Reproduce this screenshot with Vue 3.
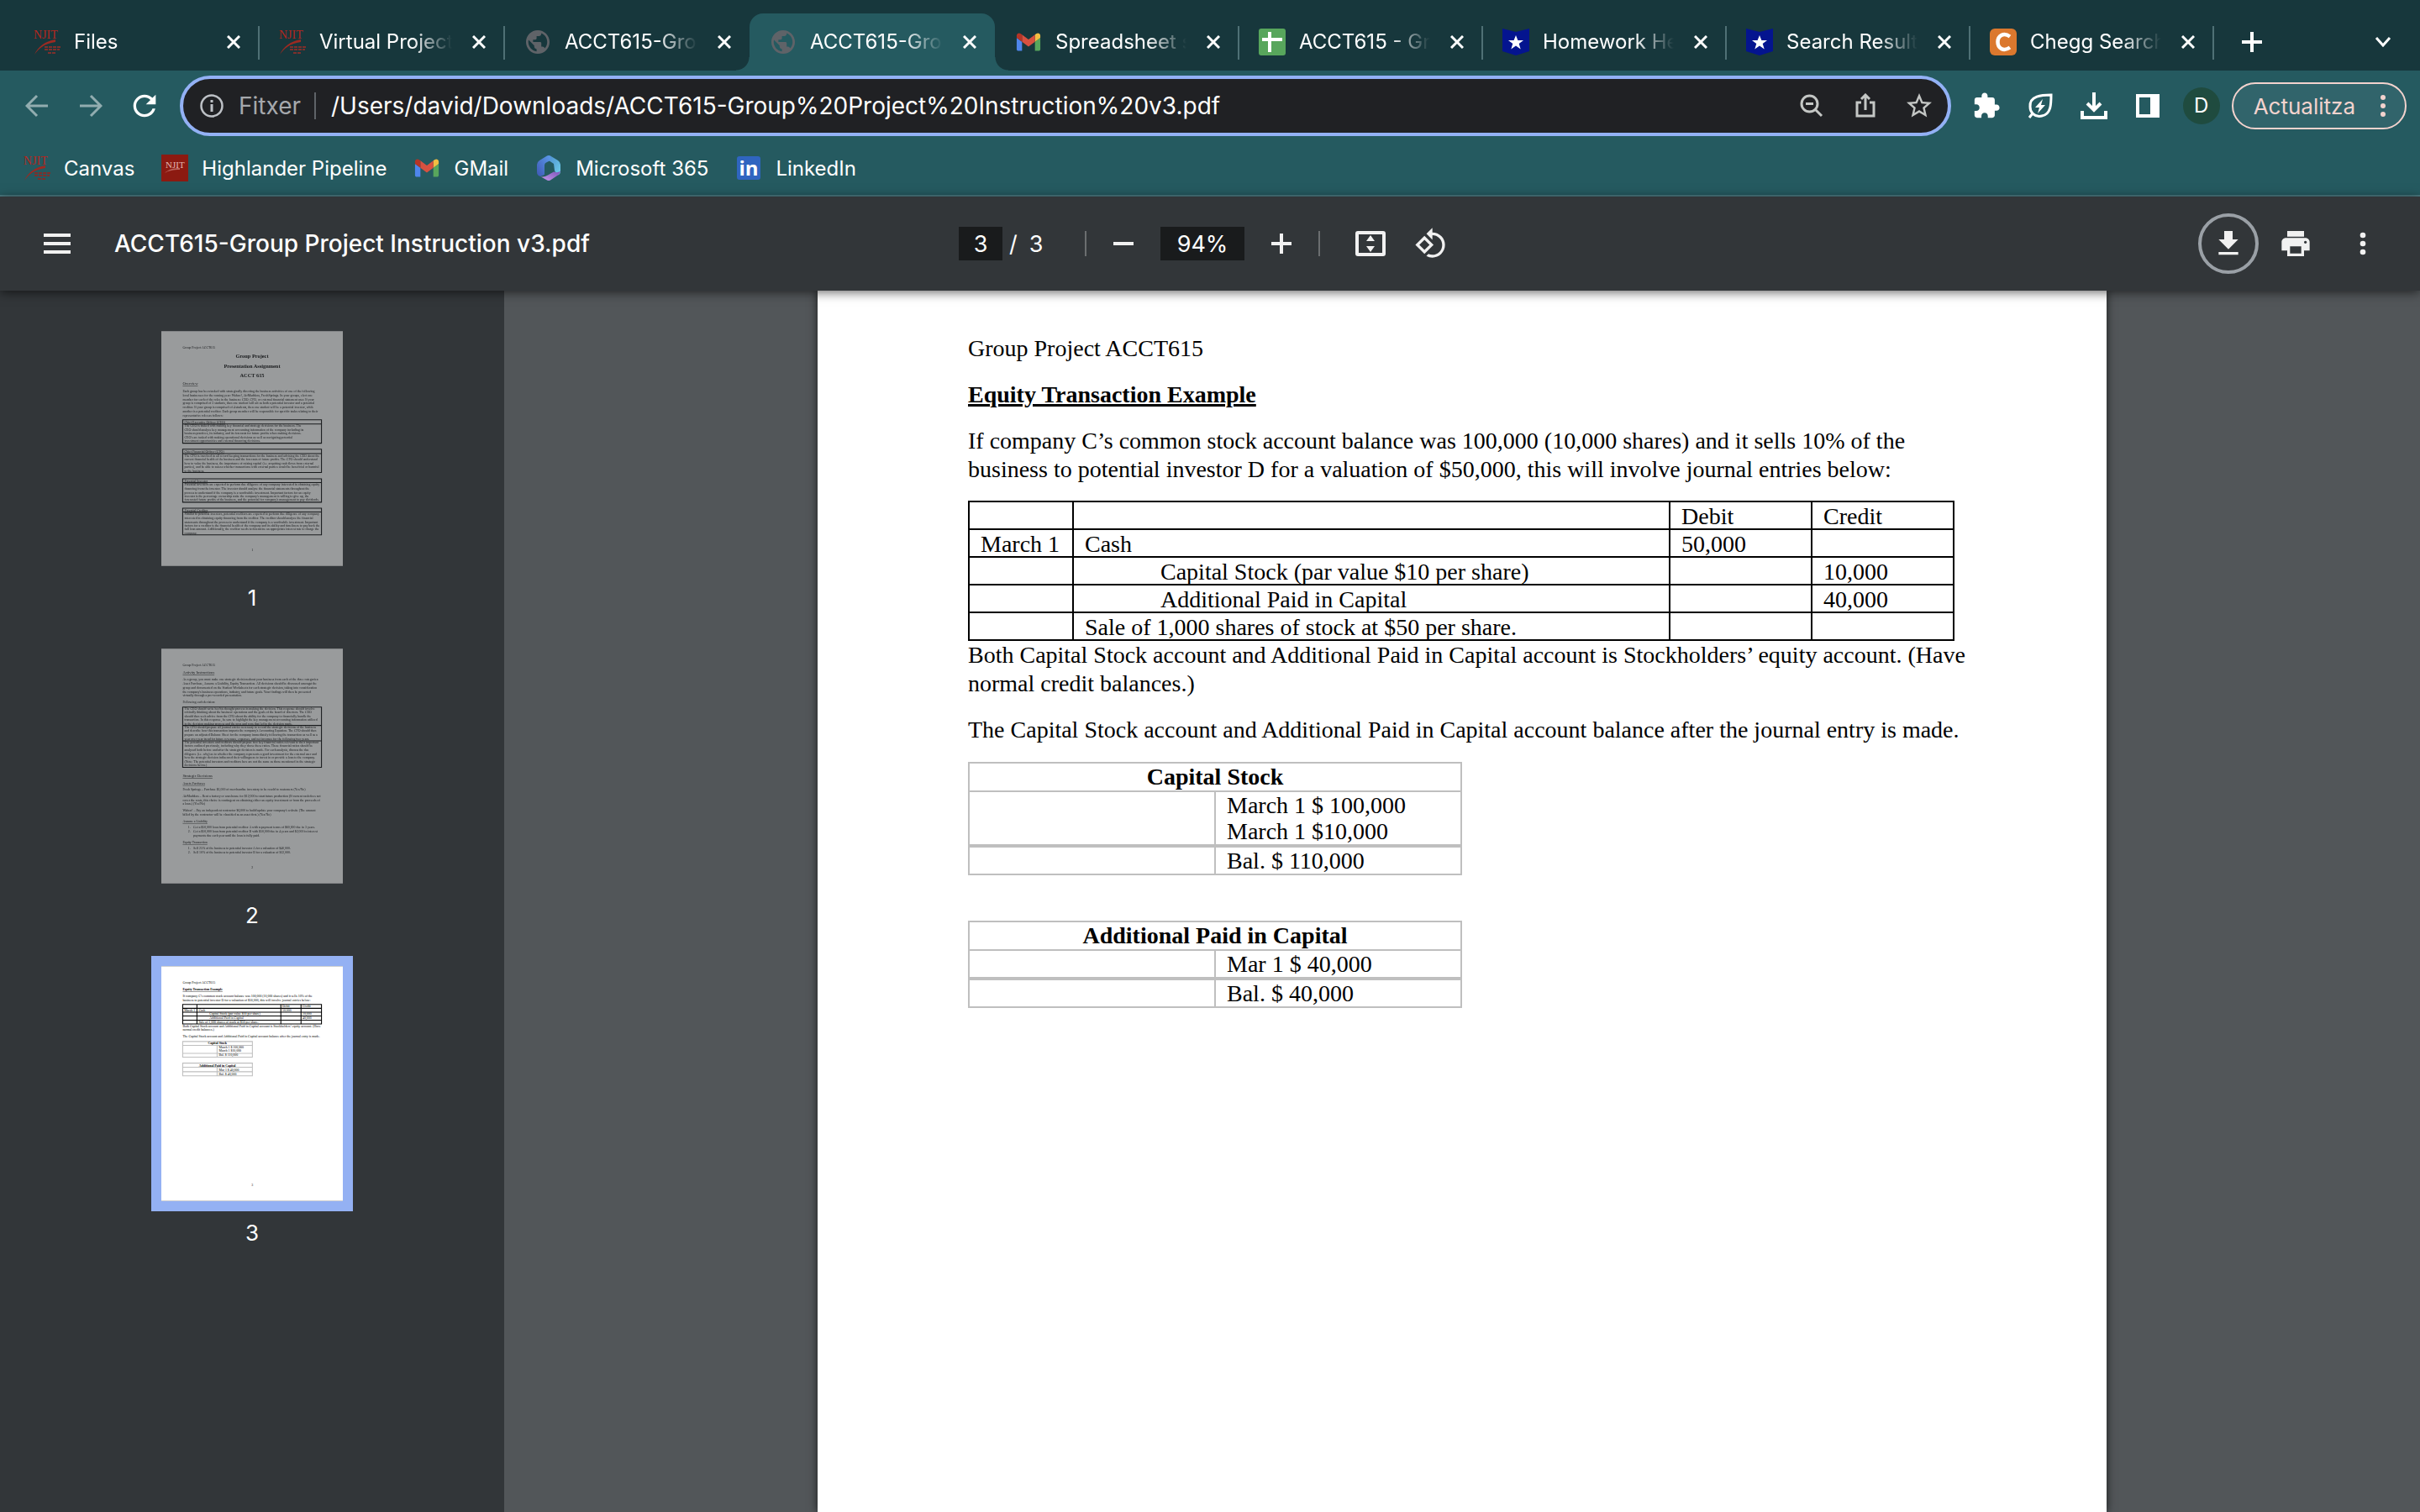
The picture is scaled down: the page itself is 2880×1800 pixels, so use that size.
<template>
  <div class="browser">
    <nav class="tab-strip">
      <div v-for="(tab, i) in tabs" :key="i" :class="['tab', { active: tab.active, divided: tab.divided }]">
        <svg class="favicon" :viewBox="icons[tab.icon].box" v-html="icons[tab.icon].body"></svg>
        <a class="tab-title" href="#">{{ tab.title }}</a>
        <button class="tab-close" aria-label="Tanca">
          <svg width="16" height="16" viewBox="0 0 16 16"><path d="M1 1l14 14M15 1L1 15" /></svg>
        </button>
      </div>
      <button class="strip-btn new-tab" aria-label="Pestanya nova">
        <svg width="24" height="24" viewBox="0 0 24 24"><path d="M12 0v24M0 12h24" stroke-width="4" /></svg>
      </button>
      <button class="strip-btn tab-search" aria-label="Cerca pestanyes">
        <svg width="20" height="12" viewBox="0 0 20 12"><path d="M2 1l8 9 8-9" stroke-width="3" /></svg>
      </button>
    </nav>

    <div class="toolbar">
      <button class="tool dim" aria-label="Enrere">
        <svg width="28" height="28" viewBox="0 0 28 28"><path class="line" d="M14 2L2 14l12 12M2 14h25" /></svg>
      </button>
      <button class="tool dim" aria-label="Endavant">
        <svg width="28" height="28" viewBox="0 0 28 28"><path class="line" d="M14 2l12 12-12 12M26 14H1" /></svg>
      </button>
      <button class="tool" aria-label="Torna a carregar">
        <svg width="40" height="40" viewBox="0 0 24 24"><path d="M17.65 6.35C16.2 4.9 14.21 4 12 4c-4.42 0-7.99 3.58-7.99 8s3.57 8 7.99 8c3.73 0 6.84-2.55 7.73-6h-2.08c-.82 2.33-3.04 4-5.65 4-3.31 0-6-2.69-6-6s2.69-6 6-6c1.66 0 3.14.69 4.22 1.78L13 11h7V4l-2.35 2.35z" /></svg>
      </button>
      <div class="omnibox">
        <svg class="info" width="28" height="28" viewBox="0 0 28 28">
          <circle cx="14" cy="14" r="12.5" fill="none" stroke="#bdc1c6" stroke-width="2.5" />
          <path d="M14 12v9M14 7v3" stroke="#bdc1c6" stroke-width="3" />
        </svg>
        <label class="scheme" for="url">Fitxer</label>
        <input id="url" v-model="url" class="url" type="text" spellcheck="false" />
        <button class="tool omni" aria-label="Zoom">
          <svg width="28" height="28" viewBox="0 0 28 28"><circle class="line" cx="11.5" cy="11.5" r="9.5" /><path class="line" d="M18 18l8 8M7 11.5h9" /></svg>
        </button>
        <button class="tool omni" aria-label="Comparteix">
          <svg width="24" height="30" viewBox="0 0 24 30"><path class="line" d="M7 11H2v16h20V11h-5M12 20V3M7 7l5-5 5 5" /></svg>
        </button>
        <button class="tool omni" aria-label="Afegeix a preferits">
          <svg width="36" height="36" viewBox="0 0 24 24"><path d="M22 9.24l-7.19-.62L12 2 9.19 8.63 2 9.24l5.46 4.73L5.82 21 12 17.27 18.18 21l-1.63-7.03L22 9.24zM12 15.4l-3.76 2.27 1-4.28-3.32-2.88 4.38-.38L12 6.1l1.71 4.04 4.38.38-3.32 2.88 1 4.28L12 15.4z" /></svg>
        </button>
      </div>
      <button class="tool" aria-label="Extensions">
        <svg width="34" height="34" viewBox="0 0 24 24"><path d="M20.5 11H19V7c0-1.1-.9-2-2-2h-4V3.5C13 2.12 11.88 1 10.5 1S8 2.12 8 3.5V5H4c-1.1 0-1.99.9-1.99 2v3.8H3.5c1.49 0 2.7 1.21 2.7 2.7s-1.21 2.7-2.7 2.7H2V20c0 1.1.9 2 2 2h3.8v-1.5c0-1.49 1.21-2.7 2.7-2.7 1.49 0 2.7 1.21 2.7 2.7V22H17c1.1 0 2-.9 2-2v-4h1.5c1.38 0 2.5-1.12 2.5-2.5S21.88 11 20.5 11z" /></svg>
      </button>
      <button class="tool" aria-label="Estalvi d'energia">
        <svg width="32" height="32" viewBox="0 0 32 32"><path class="line" d="M29 3C18 3 3 4 4 17c0 4 1 6 3 8 3 3 7 4 11 3C29 26 29 14 29 3zM7 25l-4 5" /><path d="M19 8l-9 10h5l-2 7 9-10h-5z" /></svg>
      </button>
      <button class="tool" aria-label="Baixades">
        <svg width="32" height="32" viewBox="0 0 32 32"><path d="M16 0v19M8 13l8 8 8-8M2 22v8h28v-8" fill="none" stroke="#fff" stroke-width="4" /></svg>
      </button>
      <button class="tool" aria-label="Tauler lateral">
        <svg width="28" height="28" viewBox="0 0 28 28"><path fill-rule="evenodd" d="M0 0h28v28H0zM4 4h13v20H4z" /></svg>
      </button>
      <button class="tool" aria-label="Perfil"><span class="avatar">D</span></button>
      <button class="update">
        Actualitza
        <svg width="8" height="28" viewBox="0 0 8 28"><circle cx="4" cy="4" r="3" /><circle cx="4" cy="14" r="3" /><circle cx="4" cy="24" r="3" /></svg>
      </button>
    </div>

    <div class="bookmarks">
      <a v-for="mark in bookmarks" :key="mark.title" class="bookmark" href="#">
        <svg class="favicon" :viewBox="icons[mark.icon].box" v-html="icons[mark.icon].body"></svg>{{ mark.title }}
      </a>
    </div>

    <header class="pdf-bar">
      <div class="pdf-start">
        <button class="pdf-btn" aria-label="Menú">
          <svg width="32" height="24" viewBox="0 0 32 24"><path d="M0 0h32v4H0zM0 10h32v4H0zM0 20h32v4H0z" /></svg>
        </button>
        <span class="pdf-title">ACCT615-Group Project Instruction v3.pdf</span>
      </div>
      <div class="pdf-center">
        <input v-model="page" class="pdf-input page-input" type="text" aria-label="Pàgina" />
        <span class="page-total"><span>/</span><span>3</span></span>
        <i class="rule"></i>
        <button class="pdf-btn" aria-label="Redueix">
          <svg width="24" height="24" viewBox="0 0 24 24"><path d="M0 10h24v4H0z" /></svg>
        </button>
        <input v-model="zoom" class="pdf-input zoom-input" type="text" aria-label="Zoom" />
        <button class="pdf-btn" aria-label="Amplia">
          <svg width="24" height="24" viewBox="0 0 24 24"><path d="M0 10h10V0h4v10h10v4H14v10h-4V14H0z" /></svg>
        </button>
        <i class="rule"></i>
        <div class="fit-group">
          <button class="pdf-btn" aria-label="Ajusta a la pàgina">
            <svg width="36" height="30" viewBox="0 0 36 30"><path fill-rule="evenodd" d="M3 0h30q3 0 3 3v24q0 3-3 3H3q-3 0-3-3V3q0-3 3-3zM4 4v22h28V4zM18 5l5 7H13zM18 25l5-7H13z" /></svg>
          </button>
          <button class="pdf-btn" aria-label="Gira">
            <svg width="40" height="40" viewBox="0 0 24 24"><path d="M7.34 6.41L.86 12.9l6.49 6.48 6.49-6.48-6.5-6.49zM3.69 12.9l3.66-3.66L11 12.9l-3.66 3.66-3.65-3.66zm15.67-6.26C17.61 4.88 15.3 4 13 4V.76L8.76 5 13 9.24V6c1.79 0 3.58.68 4.95 2.05 2.73 2.73 2.73 7.17 0 9.9C16.58 19.32 14.79 20 13 20c-.97 0-1.94-.21-2.84-.61l-1.49 1.49C10.02 21.62 11.51 22 13 22c2.3 0 4.61-.88 6.36-2.64 3.52-3.51 3.52-9.21 0-12.72z" /></svg>
          </button>
        </div>
      </div>
      <div class="pdf-end">
        <button class="pdf-btn ringed" aria-label="Baixa">
          <svg width="40" height="40" viewBox="0 0 24 24"><path d="M19 9h-4V3H9v6H5l7 7 7-7zM5 18v2h14v-2H5z" /></svg>
        </button>
        <button class="pdf-btn" aria-label="Imprimeix">
          <svg width="40" height="40" viewBox="0 0 24 24"><path d="M19 8H5c-1.66 0-3 1.34-3 3v6h4v4h12v-4h4v-6c0-1.66-1.34-3-3-3zm-3 11H8v-5h8v5zm3-7c-.55 0-1-.45-1-1s.45-1 1-1 1 .45 1 1-.45 1-1 1zm-1-9H6v4h12V3z" /></svg>
        </button>
        <button class="pdf-btn" aria-label="Més accions">
          <svg width="40" height="40" viewBox="0 0 24 24"><circle cx="12" cy="6" r="2" /><circle cx="12" cy="12" r="2" /><circle cx="12" cy="18" r="2" /></svg>
        </button>
      </div>
    </header>

    <main class="viewer">
      <aside class="thumbs">
        <div v-for="(thumb, i) in thumbs" :key="i" class="thumb-item">
          <button :class="['thumb', { selected: i === 2 }]" :aria-label="'Miniatura ' + (i + 1)">
            <svg viewBox="0 0 612 792">
              <rect width="612" height="792" fill="#fff" />
              <path v-for="(f, k) in thumb.frames" :key="'f' + k" :d="f.d" :stroke="f.c" class="frame" />
              <text
                v-for="(t, k) in thumb.lines"
                :key="k"
                :x="t[0]"
                :y="t[1]"
                :class="t[3]"
              >{{ t[2] }}</text>
            </svg>
          </button>
          <span class="thumb-label">{{ i + 1 }}</span>
        </div>
      </aside>

      <section class="canvas">
        <article class="sheet">
          <p>Group Project ACCT615</p>
          <h1>Equity Transaction Example</h1>
          <p class="before-table">
            If company C’s common stock account balance was 100,000 (10,000 shares) and it sells 10% of the<br />
            business to potential investor D for a valuation of $50,000, this will involve journal entries below:
          </p>
          <table class="journal">
            <colgroup>
              <col class="c-date" />
              <col />
              <col class="c-amount" />
              <col class="c-amount" />
            </colgroup>
            <tbody>
              <tr v-for="(row, i) in journal" :key="i">
                <td>{{ row.date }}</td>
                <td :class="{ indent: row.indent }">{{ row.text }}</td>
                <td>{{ row.debit }}</td>
                <td>{{ row.credit }}</td>
              </tr>
            </tbody>
          </table>
          <p>
            Both Capital Stock account and Additional Paid in Capital account is Stockholders’ equity account. (Have<br />
            normal credit balances.)
          </p>
          <p>The Capital Stock account and Additional Paid in Capital account balance after the journal entry is made.</p>
          <table v-for="acc in accounts" :key="acc.name" class="t-account">
            <thead>
              <tr><th colspan="2">{{ acc.name }}</th></tr>
            </thead>
            <tbody>
              <tr>
                <td></td>
                <td><div v-for="e in acc.entries" :key="e">{{ e }}</div></td>
              </tr>
              <tr class="balance">
                <td></td>
                <td>{{ acc.balance }}</td>
              </tr>
            </tbody>
          </table>
        </article>
      </section>
    </main>
  </div>
</template>

<script setup>
import { ref } from "vue";

const url = ref("/Users/david/Downloads/ACCT615-Group%20Project%20Instruction%20v3.pdf");
const page = ref("3");
const zoom = ref("94%");

// site icons, used by the tabs and the bookmarks
const icons = {
  njit: {
    box: "0 0 32 32",
    body: `<text x="0" y="12" font-family="Liberation Serif, serif" font-size="14" fill="#b3261e">NJIT</text>
      <path d="M26 13C13 15 5 22 1 31c5-7 11-13 25-15z" fill="#9c2a22"/>
      <path d="M13 22h19M13 25h18M17 29h10" stroke="#7e2f2b" stroke-width="2" stroke-dasharray="4 1"/>`,
  },
  highlander: {
    box: "0 0 32 32",
    body: `<rect width="32" height="32" fill="#8c1a11"/>
      <text x="5" y="16" font-family="Liberation Serif, serif" font-size="11" fill="#e3b7b2">NJIT</text>
      <path d="M22 16c-8 0-14 2-18 6 5-3 10-4 18-4z" fill="#b9645c"/>`,
  },
  globe: {
    box: "0.6 0.6 22.8 22.8",
    body: `<path fill="#5f6368" d="M12 2C6.48 2 2 6.48 2 12s4.48 10 10 10 10-4.48 10-10S17.52 2 12 2zm-1 17.93c-3.95-.49-7-3.85-7-7.93 0-.62.08-1.21.21-1.79L9 15v1c0 1.1.9 2 2 2v1.93zm6.9-2.54c-.26-.81-1-1.39-1.9-1.39h-1v-3c0-.55-.45-1-1-1H8v-2h2c.55 0 1-.45 1-1V7h2c1.1 0 2-.9 2-2v-.41c2.93 1.19 5 4.06 5 7.41 0 2.08-.8 3.97-2.1 5.39z"/>`,
  },
  gmail: {
    box: "46 25 100 100",
    body: `<path fill="#4f86ec" d="M58 108h14V74L52 59v43c0 3.32 2.69 6 6 6"/>
      <path fill="#58a65c" d="M120 108h14c3.32 0 6-2.69 6-6V59l-20 15"/>
      <path fill="#f2be42" d="M120 48v26l20-15v-8c0-7.42-8.47-11.65-14.4-7.2"/>
      <path fill="#d85140" d="M72 74V48l24 18 24-18v26L96 92"/>
      <path fill="#b53426" d="M52 51v8l20 15V48l-5.6-4.2c-5.94-4.45-14.4-.22-14.4 7.2"/>`,
  },
  sheet: {
    box: "0 0 32 32",
    body: `<rect width="32" height="32" rx="3" fill="#58a65c"/>
      <path d="M13 4v24M4 13h24" stroke="#fff" stroke-width="4"/>`,
  },
  flag: {
    box: "0 0 32 32",
    body: `<path d="M0 0l16 4 16-4v27l-16 5-16-5z" fill="#04148f"/>
      <path d="M16 8l2.4 6H25l-5.3 4 2 6.5-5.7-4-5.7 4 2-6.5L7 14h6.6z" fill="#fff"/>`,
  },
  chegg: {
    box: "0 0 32 32",
    body: `<rect width="32" height="32" rx="6" fill="#db782e"/>
      <path d="M24 9.500C16 4 9.500 9 9.500 16S16 28 24 22.500" fill="none" stroke="#fff" stroke-width="4.500"/>`,
  },
  m365: {
    box: "0 0 32 32",
    body: `<linearGradient id="m-a" x1="0" y1="1" x2="1" y2="0">
        <stop offset="0" stop-color="#3f57b5"/><stop offset="1" stop-color="#5b9bea"/>
      </linearGradient>
      <linearGradient id="m-b" x1="0" y1="0" x2="1" y2="1">
        <stop offset="0" stop-color="#4e8fd0"/><stop offset="1" stop-color="#6fd0ea"/>
      </linearGradient>
      <linearGradient id="m-c" x1="0" y1="1" x2="1" y2="0">
        <stop offset="0" stop-color="#c99aec"/><stop offset="1" stop-color="#7a52b8"/>
      </linearGradient>
      <path d="M18 1.500l9 5.500q3 2 3 5v8q0 3-3 4.500-3-2-4-5.500l-1-8-6-4z" fill="url(#m-b)"/>
      <path d="M16 1q-1 0-2 .5L5 7q-3 2-3 5v9q0 4 4 5l5-2V13q0-3 3-4l4-2V1.500q-1-.5-2-.5z" fill="url(#m-a)"/>
      <path d="M6 26l8 4.500q2 1 4 0l9-6q3-2 3-5-3 3-8 1l-7 4q-5 3-9 1.500z" fill="url(#m-c)"/>`,
  },
  linkedin: {
    box: "0 0 32 32",
    body: `<rect x="2" y="2" width="28" height="28" rx="3" fill="#2f65c0"/>
      <text x="16" y="25" text-anchor="middle" font-family="Open Sans, sans-serif" font-weight="700" font-size="24" fill="#fff">in</text>`,
  },
};

const tabs = [
  { icon: "njit", title: "Files", divided: true },
  { icon: "njit", title: "Virtual Project", divided: true },
  { icon: "globe", title: "ACCT615-Gro" },
  { icon: "globe", title: "ACCT615-Gro", active: true },
  { icon: "gmail", title: "Spreadsheet s", divided: true },
  { icon: "sheet", title: "ACCT615 - Gr", divided: true },
  { icon: "flag", title: "Homework He", divided: true },
  { icon: "flag", title: "Search Result", divided: true },
  { icon: "chegg", title: "Chegg Search", divided: true },
];

const bookmarks = [
  { icon: "njit", title: "Canvas" },
  { icon: "highlander", title: "Highlander Pipeline" },
  { icon: "gmail", title: "GMail" },
  { icon: "m365", title: "Microsoft 365" },
  { icon: "linkedin", title: "LinkedIn" },
];

const journal = [
  { debit: "Debit", credit: "Credit" },
  { date: "March 1", text: "Cash", debit: "50,000" },
  { text: "Capital Stock (par value $10 per share)", indent: true, credit: "10,000" },
  { text: "Additional Paid in Capital", indent: true, credit: "40,000" },
  { text: "Sale of 1,000 shares of stock at $50 per share." },
];

const accounts = [
  { name: "Capital Stock", entries: ["March 1 $ 100,000", "March 1 $10,000"], balance: "Bal. $ 110,000" },
  { name: "Additional Paid in Capital", entries: ["Mar 1 $ 40,000"], balance: "Bal. $ 40,000" },
];

// thumbnails are drawn in page points (612 x 792): [x, baseline, text, class]
const thumbs = [
  {
    frames: [
      { c: "#000", d: "M72 299H540V378H72zM72 313H540" },
      { c: "#000", d: "M72 398H540V477H72zM72 413H540" },
      { c: "#000", d: "M72 498H540V577H72zM72 511H540" },
      { c: "#000", d: "M72 597H540V687H72zM72 610H540" },
    ],
    lines: [
      [72, 59, "Group Project ACCT615"],
      [306, 90, "Group Project", "title"],
      [306, 125, "Presentation Assignment", "title"],
      [306, 156, "ACCT 615", "title"],
      [72, 182, "Overview", "head"],
      [72, 207, "Each group has been tasked with strategically directing the business activities of one of the following"],
      [72, 221, "local businesses for the coming year: Wahoo!, AirMaddens, FreshSprings. In your groups, elect one"],
      [72, 234, "member for each of the roles in the business: CEO, CFO, or external financial statement user. If your"],
      [72, 247, "group is comprised of 3 students, then one student will act as both a potential investor and a potential"],
      [72, 260, "creditor. If your group is comprised of 4 students, then one student will be a potential investor, while"],
      [72, 274, "another is a potential creditor. Each group member will be responsible for specific tasks relating to their"],
      [72, 288, "representative roles as follows:"],
      [78, 311, "Chief Executive Officer (CEO)", "under"],
      [78, 323, "The CEO is tasked with making key financial and strategy decisions for the business. The"],
      [78, 337, "CEO should analyze key management accounting information of the company including its"],
      [78, 349, "business practices, its industry, and its forecasts for future profits when making decisions."],
      [78, 363, "CEO's are tasked with making operational decisions as well as navigating potential"],
      [78, 374, "investment opportunities and external financing decisions."],
      [78, 411, "Chief Financial Officer (CFO)", "under"],
      [78, 423, "The CFO is involved in all record keeping transactions for the business and advising the CEO about the"],
      [78, 436, "current financial health of the business and the forecasts of future profits. The CFO should understand"],
      [78, 449, "how to value the business, the importance of raising capital (i.e. acquiring cash flows from external"],
      [78, 462, "parties), and be able to assess whether transactions with external parties would be beneficial or harmful"],
      [78, 474, "to the business."],
      [78, 510, "Potential Investor", "under"],
      [78, 522, "Potential investors are expected to perform due diligence of any company interested in obtaining equity"],
      [78, 536, "financing from the investor. The investor should analyze the financial statements throughout the"],
      [78, 548, "process to understand if the company is a worthwhile investment. Important factors for an equity"],
      [78, 561, "investor is the percentage ownership stake the company's management is willing to give up, the"],
      [78, 573, "forecasted future profits of the business, and the potential for company's management to pay dividends."],
      [78, 609, "Potential Creditor", "under"],
      [78, 621, "Similar to potential investors, potential creditors are expected to perform due diligence of any company"],
      [78, 635, "interested in obtaining equity financing from the creditor. The creditor should analyze the financial"],
      [78, 647, "statements throughout the process to understand if the company is a worthwhile investment. Important"],
      [78, 660, "factors for a creditor is the financial health of the company and its ability and timeliness to pay back the"],
      [78, 672, "full loan amount. Additionally, the creditor needs to determine an appropriate interest rate to charge the"],
      [78, 685, "company."],
      [304, 741, "1"],
    ],
  },
  {
    frames: [{ c: "#000", d: "M72 197H540V400H72zM72 259H540M72 311H540" }],
    lines: [
      [72, 59, "Group Project ACCT615"],
      [72, 85, "Activity Instructions", "head"],
      [72, 107, "As a group, you must make one strategic decision about your business from each of the three categories:"],
      [72, 121, "Asset Purchase, Assume a Liability, Equity Transaction. All decisions should be discussed amongst the"],
      [72, 135, "group and documented on the Student Worksheets for each strategic decision, taking into consideration"],
      [72, 149, "the company's business operations, industry, and future goals. Your findings will then be presented"],
      [72, 161, "virtually through a pre-recorded presentation."],
      [72, 183, "Following each decision:"],
      [78, 206, "The CEO should write her/his thought process in making the decision. This response should involve"],
      [78, 218, "critically thinking about the business' operations and the goals of the board of directors. The CEO"],
      [78, 231, "should then seek advice from the CFO about the ability for the company to financially handle the"],
      [78, 244, "transaction. In this response, be sure to highlight the key management accounting information utilized"],
      [78, 257, "in the decision making process and the pros and cons that led to the decision made."],
      [78, 268, "The CFO should prepare all journal entries necessary to record the strategic decisions of the business"],
      [78, 281, "and describe how this transaction impacts the company's Accounting Equation. The CFO should then"],
      [78, 294, "prepare an adjusted Balance Sheet for the company immediately following the transaction as well as a"],
      [78, 307, "year over year trend for future revenues, expenses, and net incomes for the following two years."],
      [78, 319, "The potential investors and creditors should prepare two key financial ratios relevant to their important"],
      [78, 332, "factors outlined previously, including why they chose these ratios. These financial ratios should be"],
      [78, 346, "analyzed both before and after the strategic decision is made. For each analysis, discuss the due"],
      [78, 358, "diligence (i.e. why) as to whether the company represents a good investment for the external user and"],
      [78, 371, "how the strategic decision influenced their willingness to invest in or provide a loan to the company."],
      [78, 384, "(Note: The potential investors and creditors here are not the same as those mentioned in the strategic"],
      [78, 397, "decisions below.)"],
      [72, 434, "Strategic Decisions", "head"],
      [72, 458, "Assets Purchases", "under"],
      [72, 479, "Fresh Springs – Purchase $3,000 of merchandise inventory to be resold to customers (Yes/No)"],
      [72, 502, "AirMaddens – Rent a factory or warehouse for $12,000 to start future production (If current cash does not"],
      [72, 515, "cover the costs, this choice is contingent on obtaining either an equity investment or from the proceeds of"],
      [72, 527, "a loan.) (Yes/No)"],
      [72, 550, "Wahoo! – Pay an independent contractor $6,000 to build/update your company's website (The amount"],
      [72, 563, "billed by the contractor will be classified as an asset first.) (Yes/No)"],
      [72, 587, "Assume a Liability", "under"],
      [90, 606, "1."],
      [108, 606, "Get a $50,000 loan from potential creditor A with repayment terms of $60,000 due in 3 years."],
      [90, 620, "2."],
      [108, 620, "Get a $50,000 loan from potential creditor B with $50,000 due in 4 years and $2,000 in interest"],
      [108, 634, "payments due each year until the loan is fully paid."],
      [72, 657, "Equity Transaction", "under"],
      [90, 676, "1."],
      [108, 676, "Sell 25% of the business to potential investor A for a valuation of $40,000."],
      [90, 690, "2."],
      [108, 690, "Sell 10% of the business to potential investor B for a valuation of $12,000."],
      [304, 741, "2"],
    ],
  },
  {
    frames: [
      { c: "#000", d: "M72 129H540V195H72zM72 142H540M72 155H540M72 168H540M72 182H540M120 129V195M403 129V195M471 129V195" },
      { c: "#bfbfbf", d: "M72 254H307V307H72zM72 267H307M72 294H307M188 267V307" },
      { c: "#bfbfbf", d: "M72 327H307V370H72zM72 341H307M72 356H307M188 341V370" },
    ],
    lines: [
      [72, 59, "Group Project ACCT615"],
      [72, 82, "Equity Transaction Example", "under bold"],
      [72, 105, "If company C’s common stock account balance was 100,000 (10,000 shares) and it sells 10% of the"],
      [72, 118, "business to potential investor D for a valuation of $50,000, this will involve journal entries below:"],
      [408, 138, "Debit"],
      [476, 138, "Credit"],
      [77, 152, "March 1"],
      [126, 152, "Cash"],
      [408, 152, "50,000"],
      [162, 165, "Capital Stock (par value $10 per share)"],
      [476, 165, "10,000"],
      [162, 178, "Additional Paid in Capital"],
      [476, 178, "40,000"],
      [126, 192, "Sale of 1,000 shares of stock at $50 per share."],
      [72, 206, "Both Capital Stock account and Additional Paid in Capital account is Stockholders’ equity account. (Have"],
      [72, 218, "normal credit balances.)"],
      [72, 241, "The Capital Stock account and Additional Paid in Capital account balance after the journal entry is made."],
      [157, 264, "Capital Stock", "bold"],
      [194, 278, "March 1 $ 100,000"],
      [194, 289, "March 1 $10,000"],
      [194, 303, "Bal. $ 110,000"],
      [127, 339, "Additional Paid in Capital", "bold"],
      [194, 354, "Mar 1 $ 40,000"],
      [194, 367, "Bal. $ 40,000"],
      [304, 741, "3"],
    ],
  },
];
</script>

<style>
body {
  margin: 0;
  background: #525659;
}
</style>

<style scoped>
* {
  box-sizing: border-box;
}
.browser {
  display: flex;
  flex-direction: column;
  height: 100vh;
  overflow: hidden;
  font-family: Inter, "Liberation Sans", sans-serif;
  color: #fff;
}
button,
input {
  font: inherit;
  color: inherit;
  background: none;
  border: none;
  padding: 0;
  margin: 0;
  outline: none;
}
button {
  display: flex;
  align-items: center;
  justify-content: center;
  cursor: pointer;
}
a {
  color: inherit;
  text-decoration: none;
}
.favicon {
  width: 32px;
  height: 32px;
  flex: none;
}

/* tabs */
.tab-strip {
  display: flex;
  height: 84px;
  flex: none;
  padding: 16px 16px 0;
  background: #17373c;
  font-size: 24px;
}
.tab {
  position: relative;
  display: flex;
  align-items: center;
  flex: 0 1 290px;
  min-width: 0;
  padding: 0 14px 0 24px;
}
.tab:nth-child(-n + 4) {
  flex-basis: 292px;
}
.tab.divided::after {
  content: "";
  position: absolute;
  right: -1px;
  top: 15px;
  width: 2px;
  height: 40px;
  background: #4f7075;
}
.tab.active {
  background: #255a60;
  border-radius: 16px 16px 0 0;
}
.tab.active::before,
.tab.active::after {
  content: "";
  position: absolute;
  bottom: 0;
  width: 16px;
  height: 16px;
}
.tab.active::before {
  left: -16px;
  background: radial-gradient(circle at 0 0, transparent 15px, #255a60 16px);
}
.tab.active::after {
  right: -16px;
  background: radial-gradient(circle at 100% 0, transparent 15px, #255a60 16px);
}
.tab-title {
  flex: 1;
  min-width: 0;
  margin: 0 16px;
  overflow: hidden;
  white-space: nowrap;
  line-height: 32px;
  mask-image: linear-gradient(to right, #000 70%, transparent);
}
.tab-close {
  width: 32px;
  height: 32px;
}
.tab-close svg {
  stroke: #fff;
  stroke-width: 3;
}
.strip-btn svg {
  fill: none;
  stroke: #fff;
}
.new-tab {
  width: 56px;
  margin-left: 18px;
}
.tab-search {
  width: 56px;
  margin-left: auto;
}

/* address bar */
.toolbar {
  display: flex;
  align-items: center;
  height: 84px;
  flex: none;
  padding: 0 16px 0 12px;
  background: #255a60;
}
.tool {
  width: 64px;
  height: 64px;
  flex: none;
}
.tool svg {
  fill: #fff;
}
.line {
  fill: none;
  stroke: #fff;
  stroke-width: 3;
}
.dim {
  opacity: 0.5;
}
.omnibox {
  display: flex;
  align-items: center;
  flex: 1;
  height: 72px;
  min-width: 0;
  margin: 0 10px;
  padding: 0 2px 0 20px;
  border: 4px solid #93b1f5;
  border-radius: 36px;
  background: #202124;
  font-size: 28px;
}
.info {
  flex: none;
}
.scheme {
  margin-left: 18px;
  padding-right: 16px;
  border-right: 2px solid #5f6368;
  line-height: 32px;
  color: #a5a8ac;
}
.url {
  flex: 1;
  min-width: 0;
  margin-left: 18px;
}
.omni svg {
  fill: #c4c7c5;
}
.omni .line {
  fill: none;
  stroke: #c4c7c5;
}
.avatar {
  width: 44px;
  height: 44px;
  border-radius: 50%;
  background: #1f4b3f;
  font-size: 24px;
  line-height: 44px;
  text-align: center;
}
.update {
  gap: 29px;
  height: 56px;
  margin-left: 4px;
  padding: 0 22px 0 24px;
  border: 2px solid #f3d3ce;
  border-radius: 28px;
  background: #31646b;
  font-size: 26px;
  color: #f3d3ce;
}
.update svg {
  fill: #f3d3ce;
}

/* bookmarks */
.bookmarks {
  display: flex;
  align-items: center;
  gap: 32px;
  height: 66px;
  flex: none;
  padding: 0 28px;
  background: #255a60;
  border-bottom: 2px solid #4b7b82;
  font-size: 24px;
}
.bookmark {
  display: flex;
  align-items: center;
  gap: 16px;
  white-space: nowrap;
}

/* pdf toolbar */
.pdf-bar {
  position: relative;
  z-index: 1;
  display: flex;
  align-items: center;
  height: 112px;
  flex: none;
  padding: 0 32px;
  background: #323639;
  box-shadow: 0 2px 12px rgba(0, 0, 0, 0.6);
  font-size: 28px;
}
.pdf-start,
.pdf-end {
  display: flex;
  align-items: center;
  flex: 1;
}
.pdf-start {
  gap: 32px;
}
.pdf-end {
  justify-content: flex-end;
  gap: 8px;
}
.pdf-title {
  font-weight: 500;
  white-space: nowrap;
}
.pdf-center {
  display: flex;
  align-items: center;
  gap: 12px;
  font-size: 27px;
}
.pdf-btn {
  width: 72px;
  height: 72px;
}
.pdf-center .pdf-btn {
  width: 64px;
}
.pdf-btn svg {
  fill: #f1f1f1;
}
.pdf-input {
  height: 40px;
  background: #191b1c;
  text-align: center;
}
.page-input {
  width: 52px;
}
.zoom-input {
  width: 100px;
}
.page-total {
  display: flex;
  gap: 14px;
  width: 78px;
  margin-left: -4px;
}
.rule {
  width: 2px;
  height: 30px;
  background: #6b6e70;
}
.fit-group {
  display: flex;
  gap: 8px;
  padding: 0 4px 0 16px;
}
.ringed {
  border: 4px solid #9aa0a6;
  border-radius: 50%;
}

/* viewer */
.viewer {
  display: flex;
  flex: 1;
  min-height: 0;
}
.thumbs {
  display: flex;
  flex-direction: column;
  align-items: center;
  width: 600px;
  flex: none;
  padding-top: 48px;
  background: #323639;
}
.thumb-item {
  display: flex;
  flex-direction: column;
  align-items: center;
  margin-bottom: 42px;
}
.thumb {
  width: 216px;
  height: 280px;
  opacity: 0.5;
}
.thumb.selected {
  opacity: 1;
  box-shadow: 0 0 0 12px #94b1f3;
}
.thumb svg {
  width: 100%;
  height: 100%;
}
.thumb text {
  font-family: "Liberation Serif", serif;
  font-size: 11px;
  fill: #000;
}
.thumb .title {
  font-size: 18px;
  font-weight: 700;
  text-anchor: middle;
}
.thumb .head {
  font-size: 13px;
  text-decoration: underline;
  text-decoration-thickness: 3px;
}
.thumb .under {
  text-decoration: underline;
  text-decoration-thickness: 2px;
}
.thumb .bold {
  font-weight: 700;
}
.frame {
  fill: none;
  stroke-width: 3;
}
.thumb-label {
  margin-top: 20px;
  font-size: 26px;
  line-height: 36px;
}
.canvas {
  display: flex;
  justify-content: center;
  flex: 1;
  min-width: 0;
  background: #525659;
}
.sheet {
  width: 100%;
  max-width: 1534px;
  padding: 52px 181px 0 179px;
  background: #fff;
  box-shadow: 0 0 10px rgba(0, 0, 0, 0.7);
  color: #000;
  font-family: "Liberation Serif", serif;
  font-size: 28px;
  line-height: 34px;
  white-space: nowrap;
}
.sheet p,
.sheet h1 {
  margin: 0 0 21px;
}
.sheet p.before-table {
  margin-bottom: 20px;
}
.sheet h1 {
  font-size: inherit;
  text-decoration: underline;
  text-decoration-thickness: 3px;
}
.sheet table {
  border-collapse: collapse;
  table-layout: fixed;
}
.journal {
  width: 100%;
  line-height: 28px;
}
.c-date {
  width: 124px;
}
.c-amount {
  width: 169px;
}
.journal td {
  height: 31px;
  padding: 3px 0 0 13px;
  border: 2px solid #000;
}
.journal td.indent {
  padding-left: 103px;
}
.t-account {
  width: 588px;
  margin-bottom: 54px;
  line-height: 31px;
}
.t-account th,
.t-account td {
  height: 31px;
  padding: 0 0 0 13px;
  border: 2px solid #bfbfbf;
}
.t-account th {
  padding: 0;
  line-height: 32px;
}
.t-account .balance td {
  border-top-width: 4px;
}
</style>
